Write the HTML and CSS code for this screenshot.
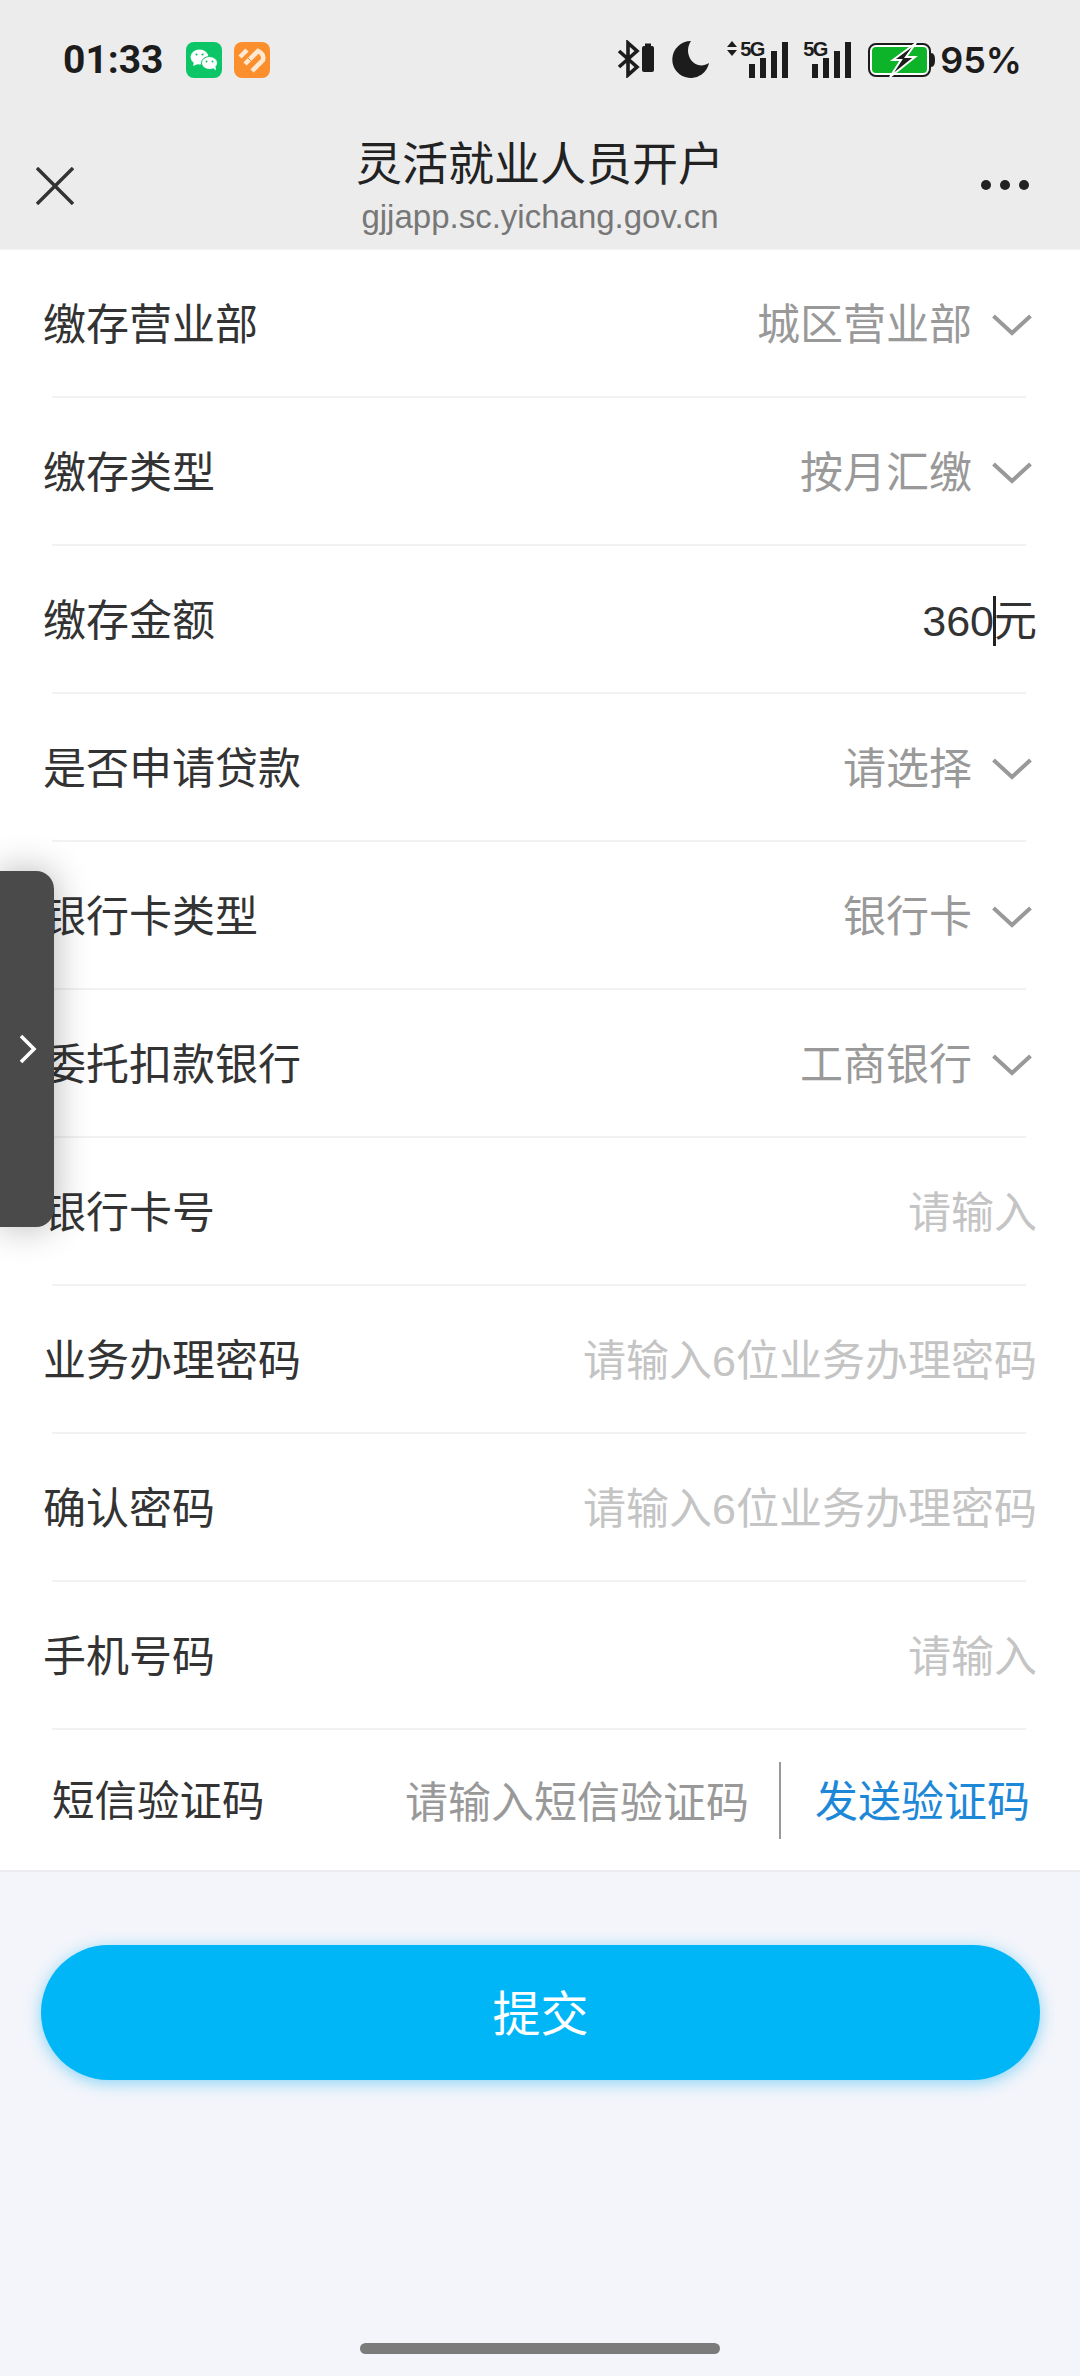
FILE: index.html

```html
<!DOCTYPE html>
<html lang="zh-CN">
<head>
  <meta charset="UTF-8" />
  <meta name="viewport" content="width=device-width, initial-scale=1" />
  <title>灵活就业人员开户</title>
  <link rel="stylesheet" href="styles.css">
</head>
<body>
  <div class="top">
    <div class="status">
      <span class="time">01:33</span>
      <svg class="app-icon" viewBox="0 0 36 36">
        <rect width="36" height="36" rx="8" fill="#0bc566"/>
        <ellipse cx="13.5" cy="15" rx="9" ry="7.5" fill="#fff"/>
        <path d="M8 20l-1 4 5-2z" fill="#fff"/>
        <ellipse cx="23.5" cy="21" rx="8" ry="6.5" fill="#fff" stroke="#0bc566" stroke-width="1"/>
        <path d="M27 26l3 2.5-.5-4z" fill="#fff"/>
        <circle cx="10.5" cy="12.5" r="1.1" fill="#0bc566"/>
        <circle cx="16.5" cy="12.5" r="1.1" fill="#0bc566"/>
        <circle cx="20.5" cy="19.5" r="1" fill="#0bc566"/>
        <circle cx="26.5" cy="19.5" r="1" fill="#0bc566"/>
      </svg>
      <svg class="app-icon" viewBox="0 0 36 36">
        <rect width="36" height="36" rx="8" fill="#fb8f2e"/>
        <path d="M6 15l7-7M11 22l13-13c4 2 6 5 5 9L18 29" fill="none" stroke="#ffe9d2" stroke-width="4.5"/>
        <path d="M12 14l5 5" fill="none" stroke="#fb8f2e" stroke-width="1"/>
      </svg>
      <span class="spacer"></span>
      <svg class="sys bt" width="37" height="38" viewBox="0 0 37 38">
        <path d="M2 11l18 16-9 8V3l9 8L2 27" fill="none" stroke="#1c1c1c" stroke-width="3.6"/>
        <rect x="25" y="6" width="12" height="26" rx="2" fill="#1c1c1c"/>
        <rect x="28" y="3.500" width="6" height="3" fill="#1c1c1c"/>
      </svg>
      <svg class="sys moon" width="37" height="38" viewBox="0 0 37 38">
        <path d="M19 1A18.500 18.500 0 1 0 37 23C31 27 23 26 19 20 15 14 15 7 19 1z" fill="#1c1c1c"/>
      </svg>
      <div class="signal first">
        <span class="arrows">
          <svg width="10" height="15" viewBox="0 0 10 15"><path d="M5 0l5 6H0zM5 15l5-6H0z" fill="#1c1c1c"/></svg>
        </span>
        <span class="net">5G</span>
        <span class="bars"><i class="b1"></i><i class="b2"></i><i class="b3"></i><i class="b4"></i></span>
      </div>
      <div class="signal">
        <span class="net">5G</span>
        <span class="bars"><i class="b1"></i><i class="b2"></i><i class="b3"></i><i class="b4"></i></span>
      </div>
      <svg class="sys battery" width="67" height="36" viewBox="0 0 67 36">
        <rect x="1" y="2" width="61" height="32" rx="7" fill="#fff" stroke="#1c1c1c" stroke-width="2"/>
        <rect x="4" y="5" width="55" height="26" rx="4" fill="#0db429"/>
        <path d="M63 11c3 0 4 3 4 7s-1 7-4 7z" fill="#1c1c1c"/>
        <path d="M48 1L25 18h8L22 35l25-20h-9l10-14z" fill="#1c1c1c" stroke="#fff" stroke-width="2"/>
      </svg>
      <span class="pct">95%</span>
    </div>
    <div class="nav">
      <svg class="close" width="38" height="38" viewBox="0 0 38 38">
        <path d="M1 1l36 36M37 1L1 37" stroke="#333" stroke-width="3.400" fill="none"/>
      </svg>
      <div class="nav-title">
        <div class="title">灵活就业人员开户</div>
        <div class="domain">gjjapp.sc.yichang.gov.cn</div>
      </div>
      <div class="more"><i></i><i></i><i></i></div>
    </div>
  </div>

  <div class="form">
    <div class="row">
      <span class="label">缴存营业部</span>
      <span class="value">城区营业部</span>
      <svg class="arrow" viewBox="0 0 40 22"><path d="M1.500 2L20 19 38.500 2" /></svg>
    </div>
    <div class="line"></div>
    <div class="row">
      <span class="label">缴存类型</span>
      <span class="value">按月汇缴</span>
      <svg class="arrow" viewBox="0 0 40 22"><path d="M1.500 2L20 19 38.500 2" /></svg>
    </div>
    <div class="line"></div>
    <div class="row">
      <span class="label">缴存金额</span>
      <span class="filled">360<i class="caret"></i>元</span>
    </div>
    <div class="line"></div>
    <div class="row">
      <span class="label">是否申请贷款</span>
      <span class="value">请选择</span>
      <svg class="arrow" viewBox="0 0 40 22"><path d="M1.500 2L20 19 38.500 2" /></svg>
    </div>
    <div class="line"></div>
    <div class="row">
      <span class="label">银行卡类型</span>
      <span class="value">银行卡</span>
      <svg class="arrow" viewBox="0 0 40 22"><path d="M1.500 2L20 19 38.500 2" /></svg>
    </div>
    <div class="line"></div>
    <div class="row">
      <span class="label">委托扣款银行</span>
      <span class="value">工商银行</span>
      <svg class="arrow" viewBox="0 0 40 22"><path d="M1.500 2L20 19 38.500 2" /></svg>
    </div>
    <div class="line"></div>
    <div class="row">
      <span class="label">银行卡号</span>
      <span class="hint">请输入</span>
    </div>
    <div class="line"></div>
    <div class="row">
      <span class="label">业务办理密码</span>
      <span class="hint">请输入6位业务办理密码</span>
    </div>
    <div class="line"></div>
    <div class="row">
      <span class="label">确认密码</span>
      <span class="hint">请输入6位业务办理密码</span>
    </div>
    <div class="line"></div>
    <div class="row">
      <span class="label">手机号码</span>
      <span class="hint">请输入</span>
    </div>
    <div class="line"></div>
    <div class="row sms">
      <span class="label">短信验证码</span>
      <span class="sms-hint">请输入短信验证码</span>
      <span class="send">发送验证码</span>
    </div>
  </div>

  <div class="submit-wrap">
    <button class="submit">提交</button>
  </div>

  <div class="side-tab">
    <svg width="18" height="30" viewBox="0 0 18 30"><path d="M2 2l13 13L2 28" fill="none" stroke="#fff" stroke-width="3.600"/></svg>
  </div>

  <div class="home-bar"></div>
</body>
</html>
```

FILE: styles.css

```css
* {
  box-sizing: border-box;
}

html, body {
  height: 100%;
}

body {
  margin: 0;
  background: #f3f5fa;
  color: #333;
  font-family: "Liberation Sans", "Noto Sans CJK SC", sans-serif;
  position: relative;
  overflow: hidden;
}

.top {
  height: 250px;
  background: #ececec;
  border-bottom: 1px solid #f2f2f2;
}

.status {
  height: 118px;
  padding: 40px 58px 0 63px;
  display: flex;
  align-items: flex-start;
}

.time {
  font-family: Roboto, sans-serif;
  font-weight: 700;
  font-size: 39px;
  line-height: 40px;
  color: #1c1c1c;
  width: 123px;
}

.app-icon {
  width: 36px;
  height: 36px;
  margin: 2px 12px 0 0;
}

.spacer {
  flex: 1;
}

.sys {
  flex: none;
}

.moon {
  margin-left: 18px;
}

.signal {
  position: relative;
  display: flex;
  align-items: flex-end;
  height: 38px;
  margin-left: 15px;
}

.signal.first {
  margin-left: 18px;
}

.arrows {
  position: absolute;
  left: 0;
  top: 1px;
  line-height: 0;
}

.signal.first .net {
  margin-left: 13px;
}

.net {
  font-family: "Liberation Sans", sans-serif;
  font-weight: 700;
  font-size: 20px;
  line-height: 18px;
  letter-spacing: -1.5px;
  color: #1c1c1c;
  align-self: flex-start;
  width: 9px;
  white-space: nowrap;
}

.bars {
  display: flex;
  align-items: flex-end;
  gap: 5px;
  height: 36px;
}

.bars i {
  display: block;
  width: 6px;
  background: #1c1c1c;
}

.b1 { height: 14px; }
.b2 { height: 20px; }
.b3 { height: 27px; }
.b4 { height: 36px; }

.battery {
  margin-left: 17px;
  margin-top: 2px;
}

.pct {
  font-family: Inter, sans-serif;
  font-weight: 600;
  font-size: 36px;
  line-height: 40px;
  margin-left: 5px;
  color: #1c1c1c;
}

.nav {
  height: 131px;
  padding-top: 16px;
  position: relative;
  display: flex;
  justify-content: center;
}

.nav-title {
  text-align: center;
}

.title {
  font-size: 46px;
  line-height: 60px;
  color: #222;
}

.domain {
  font-size: 33px;
  line-height: 38px;
  margin-top: 4px;
  color: #777;
}

.close {
  position: absolute;
  left: 36px;
  top: 49px;
}

.more {
  position: absolute;
  right: 51px;
  top: 62px;
  display: flex;
  gap: 9px;
}

.more i {
  display: block;
  width: 10px;
  height: 10px;
  border-radius: 50%;
  background: #222;
}

.form {
  background: #fff;
  border-bottom: 2px solid #ecedf0;
  height: 1622px;
}

.row {
  height: 146px;
  padding: 0 43px 4px 43px;
  display: flex;
  align-items: center;
  font-size: 43px;
}

.label {
  flex: 1;
  color: #333;
}

.value {
  color: #999;
}

.arrow {
  width: 40px;
  height: 22px;
  margin: 7px 5px 0 20px;
}

.arrow path {
  fill: none;
  stroke: #999;
  stroke-width: 4;
}

.filled {
  color: #333;
}

.caret {
  display: inline-block;
  width: 3px;
  height: 50px;
  margin: 0 -2px 0 -1px;
  vertical-align: -10px;
  background: #222;
}

.hint {
  color: #c4c4c4;
}

.line {
  height: 2px;
  margin: 0 54px 0 52px;
  background: #f2f2f2;
}

.sms {
  padding: 0 52px 3px;
  height: 140px;
}

.sms .label {
  flex: none;
  width: 353px;
  font-size: 42.500px;
  margin-top: -2px;
}

.sms-hint {
  color: #999;
  width: 376px;
  height: 77px;
  line-height: 82px;
  margin-top: 4px;
  border-right: 2px solid #999;
  flex: none;
}

.send {
  margin-left: 34px;
  color: #1e88d8;
  white-space: nowrap;
  margin-top: -2px;
}

.submit-wrap {
  padding: 73px 40px 0 41px;
}

.submit {
  display: block;
  width: 100%;
  height: 135px;
  padding: 0 0 5px;
  border: none;
  border-radius: 68px;
  background: #00b6f7;
  color: #fff;
  font-family: inherit;
  font-size: 48px;
  box-shadow: 0 3px 16px rgba(0, 170, 245, 0.45);
}

.side-tab {
  position: absolute;
  left: 0;
  top: 871px;
  width: 54px;
  height: 356px;
  background: #4a4a4a;
  border-radius: 0 18px 18px 0;
  box-shadow: 0 0 36px rgba(0, 0, 0, 0.3);
  display: flex;
  align-items: center;
  padding-left: 19px;
}

.home-bar {
  position: absolute;
  left: 360px;
  top: 2343px;
  width: 360px;
  height: 11px;
  border-radius: 6px;
  background: #7b7b7b;
}
```
